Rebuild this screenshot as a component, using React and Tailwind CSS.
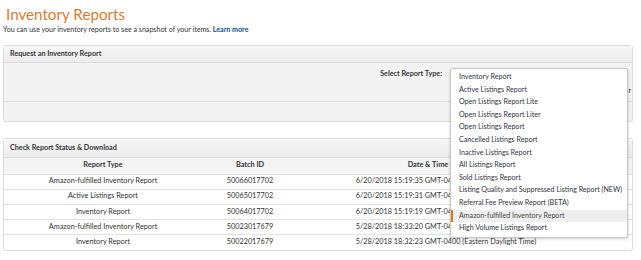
import React from 'react';

const options = [
  'Inventory Report',
  'Active Listings Report',
  'Open Listings Report Lite',
  'Open Listings Report Liter',
  'Open Listings Report',
  'Cancelled Listings Report',
  'Inactive Listings Report',
  'All Listings Report',
  'Sold Listings Report',
  'Listing Quality and Suppressed Listing Report (NEW)',
  'Referral Fee Preview Report (BETA)',
  'Amazon-fulfilled Inventory Report',
  'High Volume Listings Report',
];

const rows = [
  ['Amazon-fulfilled Inventory Report', '50066017702', '6/20/2018 15:19:35 GMT-0400 (Eastern Daylight Time)'],
  ['Active Listings Report', '50065017702', '6/20/2018 15:19:31 GMT-0400 (Eastern Daylight Time)'],
  ['Inventory Report', '50064017702', '6/20/2018 15:19:19 GMT-0400 (Eastern Daylight Time)'],
  ['Amazon-fulfilled Inventory Report', '50023017679', '5/28/2018 18:33:20 GMT-0400 (Eastern Daylight Time)'],
  ['Inventory Report', '50022017679', '5/28/2018 18:32:23 GMT-0400 (Eastern Daylight Time)'],
];

export default function App() {
  return (
    <div className="relative w-[641px] h-[260px] overflow-hidden bg-white font-['Lato',sans-serif] text-[#333]">
      {/* Titre */}
      <h1 className="pl-[6px] pt-[3px] h-[25px] text-[15.2px] leading-[22px] text-[#e07b2c]">Inventory Reports</h1>
      <p className="pl-[3px] h-[17px] text-[7.1px] leading-[10px]">
        You can use your inventory reports to see a snapshot of your items.{' '}
        <span className="font-bold text-[#0a4f92]">Learn more</span>
      </p>

      {/* Demande de rapport */}
      <div className="relative ml-[3px] mr-[8px] mt-[3px] rounded-[3px] border border-[#dcdcdc] bg-[#f3f3f3]">
        <div className="h-[17px] border-b border-[#dadada] bg-gradient-to-b from-[#f7f7f7] to-[#ececec] pl-[6px] text-[7.2px] font-bold leading-[16px]">
          Request an Inventory Report
        </div>
        <div className="flex h-[38px] justify-end pr-[1px]">
          <span className="mr-[6px] mt-[6px] text-[7.2px] font-bold leading-[10px]">Select Report Type:</span>
          <div className="w-[183px] pt-[23px] text-right text-[7.2px]">r</div>
        </div>
        <div className="h-[20px] border-t border-[#dcdcdc]"></div>

        {/* Liste déroulante ouverte */}
        <div className="absolute left-[446px] top-[22px] z-10 w-[178px] overflow-hidden rounded-[2px] border border-[#c8c8c8] bg-white pt-[2px] pb-[2px] shadow-[0_1px_3px_rgba(0,0,0,0.2)]">
          {options.map((o, i) => (
            <div
              key={o}
              className={
                i === 11
                  ? 'h-[12.6px] whitespace-nowrap border-l-2 border-[#e47911] bg-[#efefef] pl-[6px] text-[7.1px] leading-[12.6px] text-[#444]'
                  : 'h-[12.6px] whitespace-nowrap pl-[8px] text-[7.1px] leading-[12.6px] text-[#2e3440]'
              }
            >
              {o}
            </div>
          ))}
        </div>
      </div>

      {/* Statut des rapports */}
      <div className="ml-[3px] mr-[8px] mt-[16px] rounded-[3px] border border-[#dcdcdc] bg-white">
        <div className="h-[19px] border-b border-[#dadada] bg-gradient-to-b from-[#f7f7f7] to-[#ececec] pl-[6px] text-[7.2px] font-bold leading-[18px]">
          Check Report Status &amp; Download
        </div>
        <table className="w-full border-collapse text-[7.3px]">
          <thead>
            <tr className="h-[16px] bg-[#f4f4f4] font-bold">
              <th className="w-[198px] font-bold">Report Type</th>
              <th className="w-[96px] font-bold">Batch ID</th>
              <th className="w-[296px] whitespace-nowrap font-bold">Date &amp; Time Requested</th>
              <th className="font-bold"></th>
            </tr>
          </thead>
          <tbody>
            {rows.map((r, i) => (
              <tr key={i} className="h-[15.2px] border-t border-[#e3e3e3] text-center">
                <td>{r[0]}</td>
                <td>{r[1]}</td>
                <td className="whitespace-nowrap">{r[2]}</td>
                <td></td>
              </tr>
            ))}
          </tbody>
        </table>
      </div>
    </div>
  );
}
